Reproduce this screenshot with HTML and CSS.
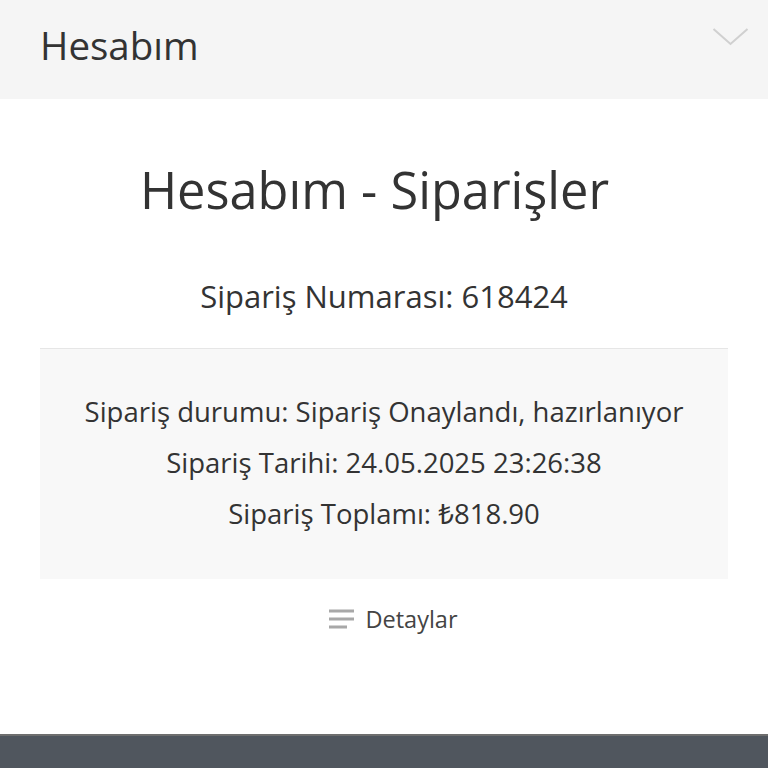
FILE: index.html
```html
<!DOCTYPE html>
<html lang="tr">
<head>
<meta charset="utf-8">
<link rel="stylesheet" href="styles.css">
</head>
<body>
<header class="topbar">
  <span class="topbar-title">Hesabım</span>
  <svg class="chevron" width="37" height="19" viewBox="0 0 37 19"><path d="M1.5 2 L18.5 17 L35.5 2" fill="none" stroke="#d0d0d0" stroke-width="2"/></svg>
</header>
<main class="content">
  <h1 class="page-title">Hesabım - Siparişler</h1>
  <div class="order-no">Sipariş Numarası: 618424</div>
  <section class="order-box">
    <p class="line">Sipariş durumu: Sipariş Onaylandı, hazırlanıyor</p>
    <p class="line">Sipariş Tarihi: 24.05.2025 23:26:38</p>
    <p class="line">Sipariş Toplamı: ₺818.90</p>
  </section>
  <div class="details">
    <svg class="menu-icon" width="25" height="20" viewBox="0 0 25 20"><rect x="0" y="0.5" width="25" height="3" fill="#a8a8a8"/><rect x="0" y="8.5" width="25" height="3" fill="#a8a8a8"/><rect x="0" y="16.5" width="18" height="3" fill="#a8a8a8"/></svg>
    <span>Detaylar</span>
  </div>
</main>
<footer class="footer"></footer>
</body>
</html>
```
FILE: styles.css
```css
html, body { margin: 0; padding: 0; }
body {
  font-family: "Open Sans", "Noto Sans", sans-serif;
  color: #333;
  background: #fff;
  width: 768px;
  height: 768px;
  overflow: hidden;
}
.topbar {
  height: 99px;
  background: #f5f5f5;
  display: flex;
  align-items: center;
  justify-content: space-between;
  padding: 0 19px 0 40px;
  box-sizing: border-box;
}
.topbar-title {
  font-size: 38.5px;
  color: #333;
  margin-top: -10px;
}
.chevron { margin-top: -26px; }
.content {
  padding: 0 40px;
  height: 635px;
  box-sizing: border-box;
  display: flex;
  flex-direction: column;
  align-items: stretch;
}
.page-title {
  font-weight: 400;
  font-size: 50.5px;
  text-align: center;
  margin: 59px 0 0;
  padding-right: 19px;
  line-height: 64px;
}
.order-no {
  font-size: 31px;
  text-align: center;
  margin-top: 54px;
  line-height: 40px;
  padding-bottom: 32px;
  border-bottom: 1px solid #e6e6e6;
}
.order-box {
  background: #f8f8f8;
  padding: 37px 0 40px;
  text-align: center;
}
.line {
  margin: 0;
  font-size: 27.5px;
  line-height: 51px;
}
.details {
  display: flex;
  justify-content: center;
  align-items: center;
  gap: 11px;
  margin-top: 24px;
  padding-left: 19px;
  font-size: 23.5px;
  line-height: 32px;
  color: #444;
}
.footer {
  height: 34px;
  background: #50565e;
  border-top: 2px solid #6e6e6e;
}
```
